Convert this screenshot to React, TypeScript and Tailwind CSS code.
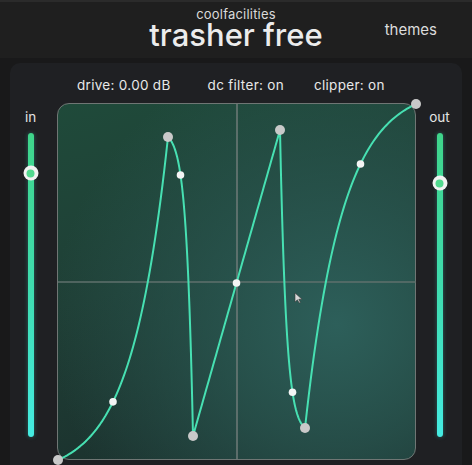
import React, { useMemo } from 'react';

// Shape points of the transfer curve, in graph box pixels (358 x 356)
const nodes = [
  { x: 0, y: 356 },
  { x: 110, y: 33 },
  { x: 135, y: 332 },
  { x: 222, y: 26 },
  { x: 247, y: 324 },
  { x: 358, y: 0 },
];
// Power of each segment, expressed as progress at the half-way handle
const bends = [0.18, 0.127, 0.5, 0.88, 0.815];

const shape = (t: number, m: number) => {
  if (Math.abs(m - 0.5) < 0.001) return t;
  const k = 2 * Math.log(1 / m - 1);
  return (Math.exp(k * t) - 1) / (Math.exp(k) - 1);
};

const Slider: React.FC<{ label: string; thumbTop: number; className?: string }> = ({ label, thumbTop, className }) => (
  <div className={`flex flex-col items-center ${className ?? ''}`}>
    <span className="text-[13.5px] leading-4 text-[#e4e4e4]">{label}</span>
    <div className="relative mt-[8px] h-[304px] w-[6px] rounded-full bg-gradient-to-b from-[#3fd58a] via-[#3fdcae] to-[#45ece2] shadow-[0_0_4px_rgba(64,230,210,0.35)]">
      <div
        className="absolute left-1/2 -translate-x-1/2 -translate-y-1/2 flex h-[15px] w-[15px] items-center justify-center rounded-full bg-[#f2f2f2]"
        style={{ top: thumbTop }}
      >
        <div className="h-[8px] w-[8px] rounded-full bg-[#52d98f]" />
      </div>
    </div>
  </div>
);

const Graph: React.FC = () => {
  const { path, handles } = useMemo(() => {
    let d = `M ${nodes[0].x} ${nodes[0].y}`;
    const hs: { x: number; y: number }[] = [];
    for (let i = 0; i < bends.length; i++) {
      const a = nodes[i];
      const b = nodes[i + 1];
      for (let s = 1; s <= 60; s++) {
        const t = s / 60;
        const x = a.x + (b.x - a.x) * t;
        const y = a.y + (b.y - a.y) * shape(t, bends[i]);
        d += ` L ${x.toFixed(2)} ${y.toFixed(2)}`;
      }
      hs.push({ x: (a.x + b.x) / 2, y: a.y + (b.y - a.y) * bends[i] });
    }
    return { path: d, handles: hs };
  }, []);

  return (
    <div className="relative mt-[10px] h-[357px] w-[359px] rounded-[12px] border-[1.5px] border-[#6f7674] bg-[radial-gradient(circle_at_78%_62%,#2d5f5a_0%,rgba(42,88,82,0.7)_35%,transparent_80%),linear-gradient(165deg,#1f4a3a_0%,#1f3f36_45%,#1a2d2b_100%)]">
      <svg className="absolute left-0 top-0 overflow-visible" width="358" height="356" viewBox="0 0 358 356">
        <line x1="179" y1="0" x2="179" y2="356" stroke="#6f7b78" strokeWidth="1.5" />
        <line x1="0" y1="178" x2="358" y2="178" stroke="#5f716d" strokeWidth="1.5" />
        <path d={path} fill="none" stroke="#47e0b2" strokeWidth="2" strokeLinejoin="round" />
        {handles.map((h, i) => (
          <circle key={`h${i}`} cx={h.x} cy={h.y} r="3.8" fill="#f4f4f4" />
        ))}
        {nodes.map((n, i) => (
          <circle key={`n${i}`} cx={n.x} cy={n.y} r="5" fill="#c9c9c9" />
        ))}
      </svg>
      {/* mouse pointer */}
      <svg className="absolute left-[236px] top-[188px]" width="9" height="12" viewBox="0 0 9 12">
        <path d="M1 1 L1 10 L3.4 7.8 L5.2 11 L6.4 10.4 L4.8 7.3 L8 7.2 Z" fill="#d8d8d8" stroke="#3a3a3a" strokeWidth="0.6" />
      </svg>
    </div>
  );
};

export default function App() {
  return (
    <div className="flex h-[465px] w-[472px] flex-col overflow-hidden bg-[#19191a] font-['Inter',sans-serif]">
      {/* Header */}
      <div className="relative flex h-[58px] flex-col items-center border-t-2 border-[#2b2b2b] bg-[#1f1f1f]">
        <span className="mt-[4px] text-[13px] leading-4 tracking-[0.2px] text-[#dadada]">coolfacilities</span>
        <span className="mt-[1px] text-[31px] font-medium leading-[24px] text-[#ececec]">trasher free</span>
        <span className="absolute right-[35px] top-[17px] text-[15px] text-[#dcdcdc]">themes</span>
      </div>

      {/* Main panel */}
      <div className="mx-[10px] mt-[5px] flex flex-1 rounded-t-[10px] bg-[#1f2023]">
        <Slider label="in" thumbTop={40} className="ml-[7px] mt-[46px] w-[27px]" />
        <div className="ml-[13px] flex flex-col pt-[14px]">
          <div className="flex h-4 items-center text-[13.5px] leading-4 tracking-[0.3px] text-[#e8e8e8]">
            <span className="ml-[20px]">drive: 0.00 dB</span>
            <span className="ml-[37px]">dc filter: on</span>
            <span className="ml-[30px]">clipper: on</span>
          </div>
          <Graph />
        </div>
        <Slider label="out" thumbTop={50} className="ml-[10px] mt-[46px] w-[27px]" />
      </div>
    </div>
  );
}
